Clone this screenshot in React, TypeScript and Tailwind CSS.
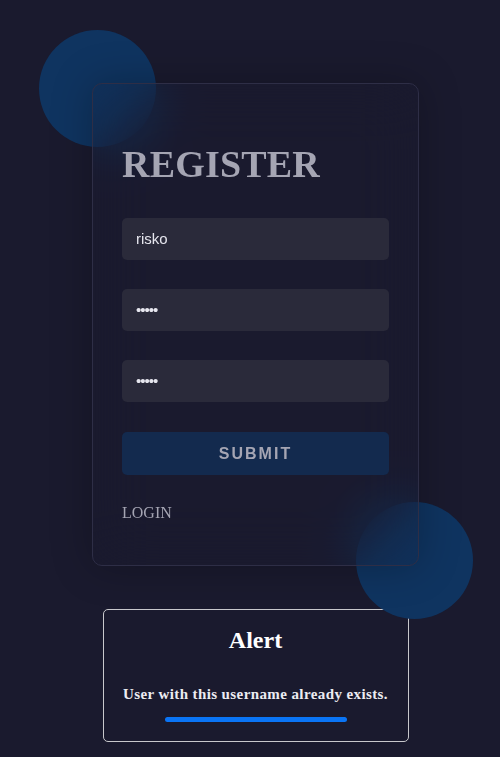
import React from "react";

export default function App() {
  return (
    <div className="min-h-[757px] w-full bg-[#1a1a2e] overflow-hidden flex flex-col items-center pl-[11px]" style={{ fontFamily: '"Liberation Serif", serif' }}>
      <div className="relative mt-[83px] w-[327px]">
        <div className="absolute left-[-53px] top-[-53px] w-[117px] h-[117px] rounded-full bg-[#0f3460]" />
        <div className="absolute right-[-54px] bottom-[-53px] w-[117px] h-[117px] rounded-full bg-[#0f3460]" />
        <div className="relative rounded-[10px] border border-[#2e2e46] bg-[#1a1a2e]/15 backdrop-blur-[28px] shadow-[0_0_40px_rgba(0,0,0,0.25)] px-[29px] pt-[58px] pb-[42px]">
          <h1 className="text-[38px] leading-[44px] font-bold text-[#a5a5b3] tracking-[0.2px]">REGISTER</h1>
          <div className="mt-[32px] flex flex-col gap-[29px]" style={{ fontFamily: '"Liberation Sans", Arial, sans-serif' }}>
            <div className="h-[42px] rounded-[5px] bg-[#2a2a3a] flex items-center pl-[14px] text-[15px] text-[#e6e6ee]">risko</div>
            <div className="h-[42px] rounded-[5px] bg-[#2a2a3a] flex items-center pl-[14px] text-[15px] text-[#e6e6ee] tracking-[-1px]">•••••</div>
            <div className="h-[42px] rounded-[5px] bg-[#2a2a3a] flex items-center pl-[14px] text-[15px] text-[#e6e6ee] tracking-[-1px]">•••••</div>
          </div>
          <div className="mt-[30px] h-[43px] rounded-[5px] bg-[#132a4e] flex items-center justify-center text-[16px] font-bold tracking-[2px] text-[#a5a5b3]" style={{ fontFamily: '"Liberation Sans", Arial, sans-serif' }}>SUBMIT</div>
          <div className="mt-[28px] text-[16px] leading-[20px] text-[#a5a5b3]">LOGIN</div>
        </div>
      </div>
      <div className="mt-[43px] w-[306px] rounded-[5px] border border-[#c8c8cc] bg-[#1a1a2e] pt-[16px] pb-[19px] flex flex-col items-center">
        <div className="text-[24px] leading-[28px] font-bold text-white">Alert</div>
        <div className="mt-[30px] text-[15px] leading-[20px] font-bold tracking-[0.4px] text-[#ececf2]">User with this username already exists.</div>
        <div className="mt-[13px] h-[5px] w-[182px] rounded-full bg-[#0a74f5]" />
      </div>
    </div>
  );
}
